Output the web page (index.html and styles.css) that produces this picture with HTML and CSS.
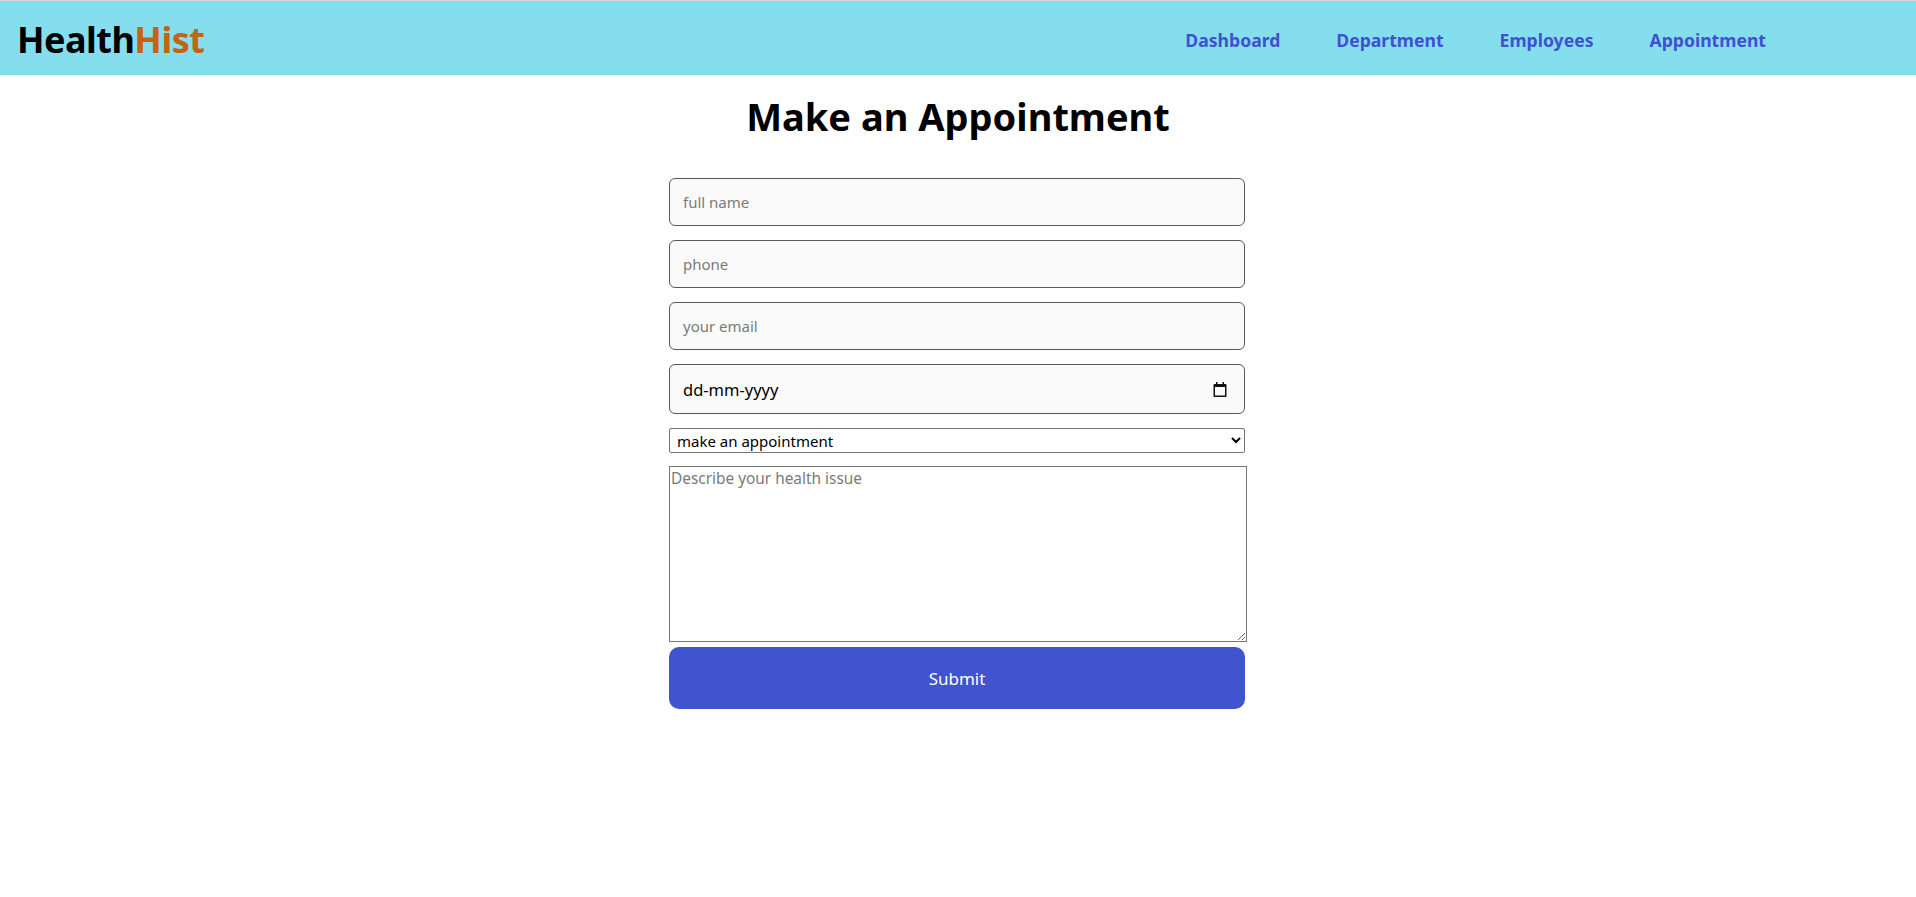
FILE: index.html
```html
<!DOCTYPE html>
<html>
<head>
	<title>HealthHist - Appointment</title>
	<meta charset="utf-8">
	<link rel="stylesheet" href="styles.css">
</head>
<body>
	<div class="nav_bar">
		<div class="logo">Health<span class="logo_hist">Hist</span></div>
		<div class="nav_links">
			<a href="#" class="nav_link">Dashboard</a>
			<a href="#" class="nav_link">Department</a>
			<a href="#" class="nav_link">Employees</a>
			<a href="#" class="nav_link">Appointment</a>
		</div>
	</div>
	<div class="page">
		<h1 class="page_title">Make an Appointment</h1>
		<form class="appointment_form">
			<input type="text" class="field" name="name" placeholder="full name">
			<input type="text" class="field" name="phone" placeholder="phone">
			<input type="email" class="field" name="email" placeholder="your email">
			<div class="field date_field">
				<input type="text" class="date_input" name="date" value="dd-mm-yyyy">
				<svg class="calendar_icon" width="14" height="15" viewBox="0 0 14 15">
					<path d="M3 0h1.5v2H3zM9.5 0H11v2H9.5z" fill="#111"/>
					<path d="M1.5 2h11a1 1 0 0 1 1 1v11a1 1 0 0 1-1 1h-11a1 1 0 0 1-1-1V3a1 1 0 0 1 1-1zM2 5v8.5h10V5z" fill="#111" fill-rule="evenodd"/>
				</svg>
			</div>
			<select class="appointment_select" name="type">
				<option>make an appointment</option>
				<option>General checkup</option>
				<option>Dental</option>
			</select>
			<textarea class="issue_box" name="issue" placeholder="Describe your health issue"></textarea>
			<button type="submit" class="submit_btn">Submit</button>
		</form>
	</div>
</body>
</html>
```

FILE: styles.css
```css
*{
	box-sizing:border-box;
	margin:0;
	padding:0;
}
body{
	font-family:"Noto Sans","Open Sans",sans-serif;
	background:white;
}
.nav_bar{
	height:75px;
	border-top:1px solid #d6d6d6;
	background:#85deed;
	display:flex;
	align-items:center;
	justify-content:space-between;
	padding:3px 150px 0 17px;
}
.logo{
	font-size:36px;
	font-weight:700;
	color:black;
	letter-spacing:-0.5px;
}
.logo_hist{
	color:#c2650e;
}
.nav_links{
	display:flex;
	gap:56px;
	padding-top:1px;
}
.nav_link{
	text-decoration:none;
	color:#3f51d0;
	font-size:17.6px;
	font-weight:700;
}
.page{
	display:flex;
	flex-direction:column;
	align-items:center;
}
.page_title{
	font-size:38px;
	font-weight:700;
	line-height:48px;
	margin-top:17px;
	color:black;
}
.appointment_form{
	width:578px;
	margin-top:38px;
	display:flex;
	flex-direction:column;
	align-items:flex-start;
}
.field{
	width:576px;
	height:48px;
	margin-bottom:14px;
	border:1px solid #5a5563;
	border-radius:6px;
	background:#fafafa;
	padding:0 13px;
	font-family:inherit;
	font-size:15px;
	color:black;
}
.field::placeholder{
	color:#7a7a7a;
}
.date_field{
	height:50px;
	display:flex;
	align-items:center;
	padding-right:17px;
}
.date_input{
	flex:1;
	border:none;
	background:transparent;
	font-family:inherit;
	font-size:16.5px;
	color:black;
	outline:none;
}
.calendar_icon{
	flex:none;
}
.appointment_select{
	width:576px;
	height:25px;
	margin-bottom:13px;
	border:1px solid #767676;
	border-radius:2px;
	background:white;
	font-family:inherit;
	font-size:15px;
	color:black;
	padding-left:3px;
}
.issue_box{
	width:578px;
	height:176px;
	border:1px solid #767676;
	padding:1px;
	font-family:inherit;
	font-size:15.4px;
	resize:vertical;
}
.issue_box::placeholder{
	color:#7a7a7a;
}
.submit_btn{
	width:576px;
	height:62px;
	margin-top:5px;
	border:none;
	border-radius:10px;
	background:#4054d0;
	color:white;
	font-family:inherit;
	font-size:17px;
	cursor:pointer;
}
```
